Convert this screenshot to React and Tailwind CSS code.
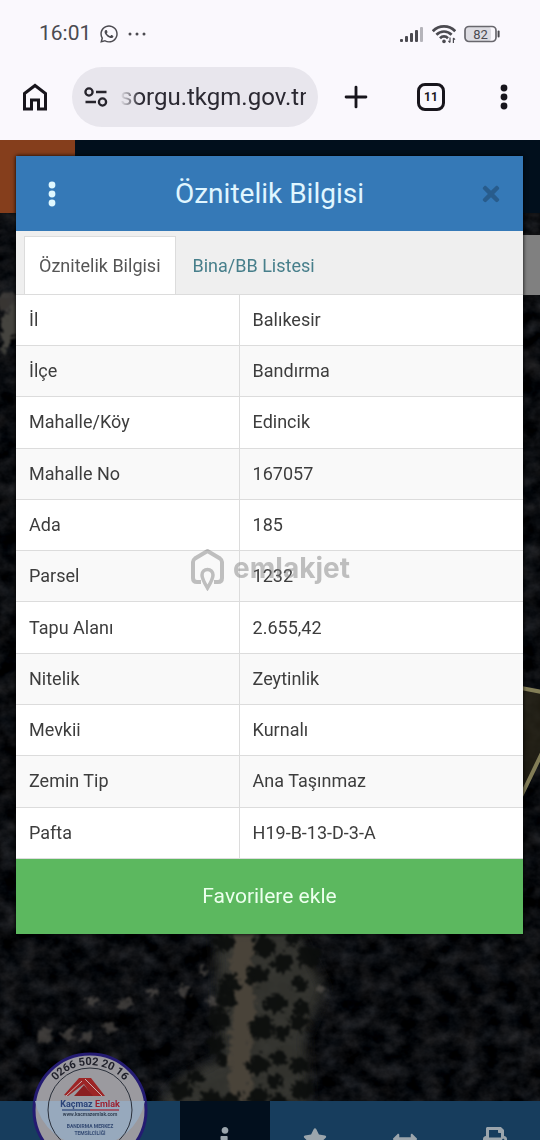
import { Plus } from 'lucide-react';
import { FaArrowsAltH, FaInfo, FaPrint, FaStar, FaTimes, FaWhatsapp } from 'react-icons/fa';

const ATTRIBUTES = [
  { label: 'İl', value: 'Balıkesir' },
  { label: 'İlçe', value: 'Bandırma' },
  { label: 'Mahalle/Köy', value: 'Edincik' },
  { label: 'Mahalle No', value: '167057' },
  { label: 'Ada', value: '185' },
  { label: 'Parsel', value: '1232' },
  { label: 'Tapu Alanı', value: '2.655,42' },
  { label: 'Nitelik', value: 'Zeytinlik' },
  { label: 'Mevkii', value: 'Kurnalı' },
  { label: 'Zemin Tip', value: 'Ana Taşınmaz' },
  { label: 'Pafta', value: 'H19-B-13-D-3-A' },
];

// x, y, radius
const TREES = [
  [222, 727, 11], [262, 731, 12], [290, 724, 8], [280, 748, 11], [307, 741, 13], [255, 760, 12],
  [228, 770, 12], [296, 768, 9], [224, 786, 11], [273, 788, 12], [300, 793, 10], [216, 804, 12],
  [259, 812, 14], [280, 817, 9], [297, 808, 11], [214, 830, 10], [220, 844, 8], [256, 850, 12],
  [277, 842, 10], [298, 850, 10], [272, 866, 10], [299, 874, 12], [194, 862, 9], [178, 876, 12],
  [210, 884, 12], [230, 886, 11], [256, 882, 12], [276, 886, 9],
];

const CLEARINGS = [
  [182, 776, 7], [123, 789, 7], [108, 812, 6], [42, 819, 8], [66, 818, 7], [84, 820, 6],
  [90, 786, 6], [150, 776, 5], [318, 774, 6], [200, 756, 5], [210, 786, 5], [6, 86, 12],
];

function SignalIcon() {
  return (
    <svg aria-hidden="true" className="h-4 w-6" fill="#4b4a50" viewBox="0 0 24 16">
      <rect height="3" rx="1" width="3" x="0" y="13" />
      <rect height="6" rx="1" width="3" x="5" y="10" />
      <rect height="9" rx="1" width="3" x="10" y="7" />
      <rect height="12" rx="1" width="3" x="15" y="4" />
      <rect fill="#b5b4ba" height="15" rx="1" width="3" x="20" y="1" />
    </svg>
  );
}

function WifiIcon() {
  return (
    <svg aria-hidden="true" className="h-5 w-6" fill="none" stroke="#4b4a50" strokeWidth="2.7" viewBox="0 0 24 20">
      <path d="M.8 7.2C7 .8 17 .8 23.2 7.2" />
      <path d="M4.4 10.8c4.4-4.4 10.8-4.4 15.2 0" />
      <path d="M8 14.2c2.4-2.4 5.6-2.4 8 0" />
      <circle cx="12" cy="17.4" fill="#4b4a50" r="1.8" stroke="none" />
      <path d="M18 13.5v5m-1.6-1.6L18 18.6M21.4 19v-5m1.6 1.6L21.4 14" strokeWidth="1.2" />
    </svg>
  );
}

function BatteryIcon() {
  return (
    <svg aria-hidden="true" className="h-[18px] w-9" viewBox="0 0 36 18">
      <rect fill="#dddce2" height="15" rx="4" width="26" x="1" y="1.5" />
      <rect fill="none" height="15" rx="4" stroke="#68676d" strokeWidth="1.7" width="31" x="1" y="1.5" />
      <path d="M34.6 6.5v5" stroke="#4b4a50" strokeLinecap="round" strokeWidth="2" />
      <text fill="#4b4a50" fontSize="13" textAnchor="middle" x="16.5" y="13.6">82</text>
    </svg>
  );
}

function HomeIcon() {
  return (
    <svg aria-hidden="true" className="h-7 w-[26px]" fill="none" stroke="#17151c" strokeWidth="3" viewBox="0 0 26 28">
      <path d="M2.5 10.5 13 2.5l10.5 8V26H16.5V17h-7v9h-7z" />
    </svg>
  );
}

function TuneIcon() {
  return (
    <svg aria-hidden="true" className="h-5 w-6 shrink-0" fill="none" stroke="#26242c" strokeWidth="2.3" viewBox="0 0 24 20">
      <circle cx="5" cy="5" r="3.6" />
      <path d="M12 5h10.5M1.5 15H12" />
      <circle cx="18.5" cy="15" r="3.6" />
    </svg>
  );
}

function DotsIcon({ className }) {
  return (
    <svg aria-hidden="true" className={className} fill="currentColor" viewBox="0 0 8 26">
      <circle cx="4" cy="4" r="3.4" />
      <circle cx="4" cy="13" r="3.4" />
      <circle cx="4" cy="22" r="3.4" />
    </svg>
  );
}

function BrowserBar() {
  return (
    <header className="bg-[#faf8fd] pb-[13px]">
      <div className="flex h-[67px] items-center justify-between pr-10 pl-[39px] text-[#4b4a50]">
        <div className="flex items-center gap-2">
          <span className="text-[21px]">16:01</span>
          <FaWhatsapp aria-hidden="true" size={20} />
          <svg aria-hidden="true" className="h-1 w-5" fill="currentColor" viewBox="0 0 20 4">
            <circle cx="3" cy="2" r="1.5" />
            <circle cx="10" cy="2" r="1.5" />
            <circle cx="17" cy="2" r="1.5" />
          </svg>
        </div>
        <div className="flex items-center gap-2">
          <SignalIcon />
          <WifiIcon />
          <BatteryIcon />
        </div>
      </div>
      <div className="flex items-center pl-[22px] text-[#17151c]">
        <button aria-label="Ana sayfa" className="mr-6" type="button">
          <HomeIcon />
        </button>
        <div className="flex h-[60px] min-w-0 flex-1 items-center gap-3 rounded-full bg-[#e8e6ed] px-3">
          <TuneIcon />
          <input
            aria-label="Adres"
            className="w-full min-w-0 bg-transparent text-right text-2xl text-[#2b2932] outline-none [mask-image:linear-gradient(to_right,transparent,black_20px)]"
            defaultValue="sorgu.tkgm.gov.tr"
            type="text"
          />
        </div>
        <button aria-label="Yeni sekme" className="flex w-[76px] justify-center" type="button">
          <Plus aria-hidden="true" size={34} strokeWidth={2} />
        </button>
        <button aria-label="Sekmeler" className="flex w-[74px] justify-center" type="button">
          <span className="flex size-7 items-center justify-center rounded-lg border-3 border-[#17151c] text-xs font-bold">
            11
          </span>
        </button>
        <button aria-label="Menü" className="flex w-[72px] justify-center" type="button">
          <DotsIcon className="h-[26px] w-2" />
        </button>
      </div>
    </header>
  );
}

function SatelliteMap() {
  return (
    <svg aria-hidden="true" className="absolute inset-0 h-full w-full bg-[#090b0d]">
      <defs>
        <filter colorInterpolationFilters="sRGB" height="100%" id="canopy" width="100%" x="0" y="0">
          <feTurbulence baseFrequency="0.05 0.06" numOctaves="4" seed="8" type="fractalNoise" />
          <feColorMatrix values="0.26 0 0 0 -0.09  0.25 0.02 0 0 -0.088  0.25 0.04 0 0 -0.086  0 0 0 0 1" />
        </filter>
        <filter colorInterpolationFilters="sRGB" height="140%" id="rough" width="140%" x="-20%" y="-20%">
          <feTurbulence baseFrequency="0.12" numOctaves="3" result="n" seed="3" />
          <feDisplacementMap in="SourceGraphic" in2="n" scale="12" xChannelSelector="R" yChannelSelector="G" />
          <feGaussianBlur stdDeviation="1" />
        </filter>
        <filter height="140%" id="soft" width="140%" x="-20%" y="-20%">
          <feGaussianBlur stdDeviation="6" />
        </filter>
      </defs>
      <rect filter="url(#canopy)" height="100%" width="100%" />
      <path
        d="M215 715h80l30 60-20 50 5 70H155l25-30 40-20z"
        fill="#3a3b35"
        filter="url(#soft)"
        opacity=".85"
      />
      <g filter="url(#rough)">
        <path d="M232 715h20l-3 45 5 30-6 40 2 65h-24l2-70 3-45-4-30z" fill="#4b453b" opacity=".9" />
        {CLEARINGS.map(([x, y, r]) => (
          <ellipse cx={x} cy={y} fill="#5d5854" key={`${x}-${y}`} opacity=".6" rx={r} ry={r - 1} />
        ))}
        {TREES.map(([x, y, r]) => (
          <ellipse cx={x} cy={y} fill="#0b0d0c" key={`${x}-${y}`} opacity=".92" rx={r - 1} ry={r - 2} />
        ))}
        <path d="M0 105 16 85v30L0 140z" fill="#45443f" />
      </g>
      <g className="translate-x-[calc(100%-540px)]">
        <path d="M500 470l40 9v65l-17 38-23 20z" fill="#292518" opacity=".75" />
        <path d="M500 471l42 8M542 540l-30 62" fill="none" stroke="#827d57" strokeWidth="4" />
      </g>
    </svg>
  );
}

function AgencyStamp() {
  return (
    <svg aria-label="Kaçmaz Emlak" className="h-[120px] w-[120px]" role="img" viewBox="0 0 120 120">
      <defs>
        <path d="M15 60a45 45 0 0 1 90 0" id="stamp-arc" />
      </defs>
      <circle cx="60" cy="60" fill="#9b9a9f" r="56" stroke="#241b72" strokeWidth="3" />
      <path d="M5 51a56 56 0 0 0 110 0z" fill="#97a9bd" />
      <circle cx="60" cy="60" fill="none" r="42" stroke="#2a303b" strokeWidth="1" />
      <text fill="#20212b" fontSize="11" fontWeight="700">
        <textPath href="#stamp-arc" startOffset="50%" textAnchor="middle">0266 502 20 16</textPath>
      </text>
      <path d="M34 45 49 28h12l14 18H62L54 34 38 46z" fill="#9d2526" />
      <path d="M44 46 54 35l9 11z" fill="#8b1e20" />
      <path d="m55 29 17 17M36 46l16-15" stroke="#c9b4b2" strokeWidth="1" />
      <text
        fontFamily="Liberation Sans Narrow, Roboto, sans-serif"
        fontSize="9"
        fontWeight="700"
        textAnchor="middle"
        x="60"
        y="57"
      >
        <tspan fill="#2b4378">Kaçmaz </tspan>
        <tspan fill="#9d2231">Emlak</tspan>
      </text>
      <path d="M32 60h28" stroke="#2b4378" strokeWidth="1.2" />
      <path d="M60 60h29" stroke="#9d2231" strokeWidth="1.2" />
      <text fill="#344255" fontSize="5" fontWeight="700" textAnchor="middle" x="60" y="66">www.kacmazemlak.com</text>
      <text fill="#344b74" fontSize="5" fontWeight="700" textAnchor="middle" x="60" y="78">BANDIRMA MERKEZ</text>
      <text fill="#344b74" fontSize="5" fontWeight="700" textAnchor="middle" x="60" y="85">TEMSİLCİLİĞİ</text>
    </svg>
  );
}

function PageBehind() {
  return (
    <div className="absolute inset-0 flex flex-col">
      <div className="flex h-[73px] shrink-0 bg-[#010f1c]">
        <div className="w-[75px] bg-[#853e1c]" />
      </div>
      <div className="relative flex flex-1 flex-col items-end overflow-hidden">
        <SatelliteMap />
        <div className="relative mt-[22px] h-[60px] w-12 bg-[#808080]" />
      </div>
      <nav className="grid h-[39px] shrink-0 grid-cols-6 overflow-hidden bg-[#173d5d] text-[#9ba5ac]">
        <span />
        <span />
        <button aria-label="Bilgi" className="flex justify-center bg-[#020f1d] pt-[26px]" type="button">
          <FaInfo size={24} />
        </button>
        <button aria-label="Favoriler" className="flex justify-center pt-[26px]" type="button">
          <FaStar size={24} />
        </button>
        <button aria-label="Ölçüm" className="flex justify-center pt-[26px]" type="button">
          <FaArrowsAltH size={24} />
        </button>
        <button aria-label="Yazdır" className="flex justify-center pt-[26px]" type="button">
          <FaPrint size={24} />
        </button>
      </nav>
      <div className="absolute -bottom-[30px] left-[30px]">
        <AgencyStamp />
      </div>
    </div>
  );
}

function AttributeDialog() {
  return (
    <section
      aria-labelledby="dialog-title"
      className="relative mt-4 mr-[17px] ml-4 bg-white text-lg text-[#3d3d3d] shadow-[0_0_4px_#000]"
      role="dialog"
    >
      <div className="flex h-[75px] items-center bg-[#3579b7]">
        <button aria-label="Seçenekler" className="flex w-[72px] justify-center text-[#dff8ff]" type="button">
          <DotsIcon className="h-[26px] w-2" />
        </button>
        <h1 className="flex-1 text-center text-[28px] text-[#e0f6ff]" id="dialog-title">Öznitelik Bilgisi</h1>
        <button aria-label="Kapat" className="flex w-[72px] justify-end pr-5 text-[#285c8c]" type="button">
          <FaTimes aria-hidden="true" size={24} />
        </button>
      </div>

      <div className="flex h-16 items-end border-b border-[#dcdcdc] bg-[#efefef] px-2" role="tablist">
        <button
          aria-selected="true"
          className="h-[58px] border border-b-0 border-[#dcdcdc] bg-white px-3.5 text-[#555]"
          role="tab"
          type="button"
        >
          Öznitelik Bilgisi
        </button>
        <button
          aria-selected="false"
          className="h-[58px] border border-b-0 border-transparent px-4 text-[#477f8b]"
          role="tab"
          type="button"
        >
          Bina/BB Listesi
        </button>
      </div>

      <table className="h-[564px] w-full table-fixed border-collapse">
        <tbody>
          {ATTRIBUTES.map(({ label, value }) => (
            <tr className="border-b border-[#dcdcdc] even:bg-[#f9f9f9]" key={label}>
              <th className="w-[44%] border-r border-[#dcdcdc] px-[13px] text-left font-normal" scope="row">
                {label}
              </th>
              <td className="px-[13px]">{value}</td>
            </tr>
          ))}
        </tbody>
      </table>

      <button className="h-[75px] w-full bg-[#5cb85f] text-[21px] text-[#ecffed]" type="button">
        Favorilere ekle
      </button>
    </section>
  );
}

function Watermark() {
  return (
    <div className="pointer-events-none absolute inset-0 flex items-center justify-center gap-2 text-[#777] opacity-45">
      <svg aria-hidden="true" className="h-[42px] w-[35px]" fill="none" stroke="currentColor" viewBox="0 0 35 42">
        <path d="M11 33H7q-4 0-4-4V13q0-2 2-3.5L17.5 2 30 9.5q2 1.5 2 3.5v16q0 4-4 4h-4" strokeWidth="4" />
        <path d="M17.5 39c-3-5-5.500-9-5.500-13a5.500 5.500 0 0 1 11 0c0 4-2.500 8-5.500 13z" strokeWidth="3.5" />
      </svg>
      <span className="pb-1 font-['Inter',sans-serif] text-[28px] leading-8 font-bold">emlakjet</span>
    </div>
  );
}

function App() {
  return (
    <div className="relative flex min-h-screen flex-col font-['Roboto',sans-serif]">
      <BrowserBar />
      <main className="relative flex-1 overflow-hidden">
        <PageBehind />
        <AttributeDialog />
      </main>
      <Watermark />
    </div>
  );
}

export default App;
